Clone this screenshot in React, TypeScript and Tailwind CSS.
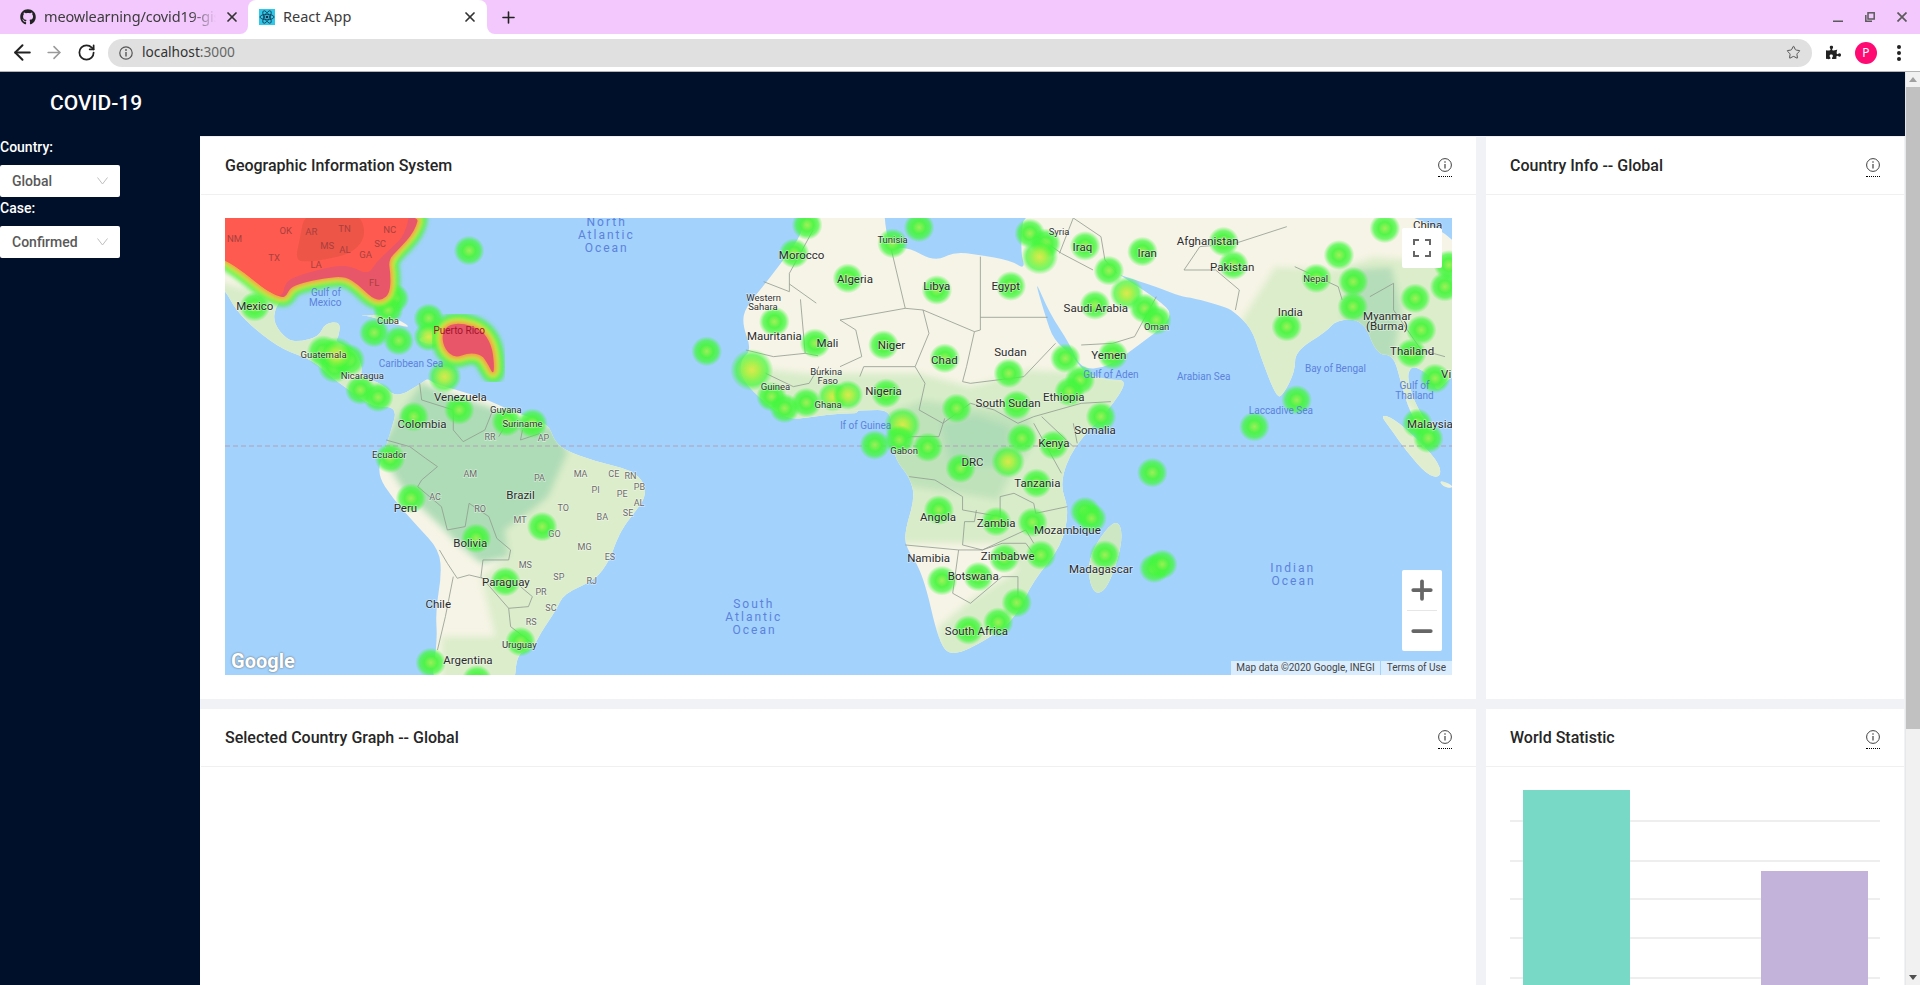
import { ArrowLeft, ArrowRight, RotateCw, Plus, X, Minus, Star } from 'lucide-react';
import { FaGithub, FaPuzzlePiece } from 'react-icons/fa';

// zoom-space helpers: west half and east half of the map share a y axis
const LEFT = 'translate(220 210) scale(0.3954 0.3333)';
const RIGHT = 'translate(840 210) scale(0.3954 0.3333)';
const GULF = 'translate(225 218) scale(0.3333)';
const px = (x: number, east = false) => (east ? 840 : 220) + x * 0.3954;
const py = (y: number) => 210 + y / 3;

// rounds a polygon outline so the coasts don't look like straight cuts
const soft = (d: string) =>
  d
    .split('M')
    .filter(Boolean)
    .map((sub) => {
      const n = sub.match(/-?\d+(\.\d+)?/g)!.map(Number);
      const p: [number, number][] = [];
      for (let i = 0; i < n.length; i += 2) p.push([n[i], n[i + 1]]);
      const mid = (a: [number, number], b: [number, number]) => `${(a[0] + b[0]) / 2} ${(a[1] + b[1]) / 2}`;
      let out = `M${mid(p[p.length - 1], p[0])}`;
      p.forEach((pt, i) => {
        out += ` Q${pt[0]} ${pt[1]} ${mid(pt, p[(i + 1) % p.length])}`;
      });
      return out + ' Z';
    })
    .join(' ');

type Lbl = [string, number, number, 'c' | 's' | 'w' | 'o' | 'b'];

const westLabels: Lbl[] = [
  ['North', 978, 37, 'o'], ['Atlantic', 977, 76, 'o'], ['Ocean', 978, 115, 'o'],
  ['South', 1350, 1183, 'o'], ['Atlantic', 1350, 1221, 'o'], ['Ocean', 1352, 1261, 'o'],
  ['Gulf of', 268, 246, 'w'], ['Mexico', 266, 277, 'w'], ['Caribbean Sea', 483, 459, 'w'],
  ['Mexico', 88, 288, 'c'], ['Cuba', 425, 330, 's'],
  ['Guatemala', 262, 432, 's'], ['Nicaragua', 360, 497, 's'], ['Venezuela', 608, 561, 'c'],
  ['Guyana', 723, 598, 's'], ['Suriname', 765, 640, 's'], ['Colombia', 511, 642, 'c'],
  ['Ecuador', 428, 732, 's'], ['Peru', 469, 894, 'c'], ['Brazil', 760, 855, 'c'],
  ['Bolivia', 633, 998, 'c'], ['Paraguay', 723, 1117, 'c'], ['Chile', 552, 1181, 'c'],
  ['Uruguay', 757, 1303, 's'], ['Argentina', 627, 1351, 'c'], ['Morocco', 1471, 136, 'c'],
  ['Western', 1375, 262, 's'], ['Sahara', 1373, 288, 's'], ['Mauritania', 1402, 378, 'c'],
  ['Mali', 1536, 399, 'c'], ['Burkina', 1533, 484, 's'], ['Faso', 1537, 510, 's'],
  ['Guinea', 1405, 528, 's'], ['Ghana', 1538, 582, 's'],
  ['RR', 683, 681, 'b'], ['AP', 818, 685, 'b'], ['AM', 633, 792, 'b'], ['PA', 808, 804, 'b'],
  ['MA', 912, 793, 'b'], ['CE', 996, 792, 'b'], ['RN', 1038, 798, 'b'], ['PB', 1061, 831, 'b'],
  ['PI', 950, 840, 'b'], ['PE', 1017, 852, 'b'], ['AL', 1060, 879, 'b'], ['AC', 544, 861, 'b'],
  ['RO', 658, 897, 'b'], ['TO', 868, 894, 'b'], ['SE', 1032, 909, 'b'], ['BA', 967, 921, 'b'],
  ['MT', 759, 930, 'b'], ['GO', 846, 972, 'b'], ['MG', 922, 1011, 'b'], ['ES', 986, 1041, 'b'],
  ['MS', 772, 1065, 'b'], ['SP', 857, 1101, 'b'], ['RJ', 940, 1113, 'b'], ['PR', 812, 1146, 'b'],
  ['SC', 837, 1194, 'b'], ['RS', 787, 1236, 'b'],
];

// these sit in the red part of the heat layer
const usLabels: [string, number, number][] = [
  ['NM', 37, 84], ['OK', 166, 60], ['AR', 231, 63], ['TN', 315, 54], ['NC', 429, 57], ['MS', 271, 105],
  ['AL', 316, 117], ['SC', 405, 99], ['GA', 368, 132], ['TX', 137, 141], ['LA', 243, 163], ['FL', 390, 216],
];

const eastLabels: Lbl[] = [
  ['Tunisia', 133, 87, 's'], ['Syria', 554, 64, 's'], ['Iraq', 613, 111, 'c'], ['Iran', 777, 129, 'c'],
  ['Afghanistan', 930, 93, 'c'], ['Pakistan', 992, 171, 'c'], ['China', 1486, 46, 'c'], ['Algeria', 38, 207, 'c'],
  ['Libya', 245, 229, 'c'], ['Egypt', 419, 228, 'c'], ['Saudi Arabia', 647, 294, 'c'], ['Nepal', 1203, 204, 's'],
  ['India', 1139, 305, 'c'], ['Myanmar', 1384, 319, 'c'], ['(Burma)', 1383, 348, 'c'], ['Oman', 801, 349, 's'],
  ['Niger', 130, 405, 'c'], ['Sudan', 431, 426, 'c'], ['Chad', 264, 449, 'c'], ['Yemen', 680, 435, 'c'],
  ['Thailand', 1447, 423, 'c'], ['Gulf of Aden', 685, 492, 'w'], ['Arabian Sea', 920, 498, 'w'],
  ['Bay of Bengal', 1253, 474, 'w'], ['Vi', 1533, 491, 'c'], ['Gulf of', 1453, 527, 'w'], ['Thailand', 1453, 555, 'w'],
  ['Nigeria', 110, 543, 'c'], ['Ethiopia', 566, 561, 'c'], ['South Sudan', 425, 579, 'c'], ['Laccadive Sea', 1115, 600, 'w'],
  ['Malaysia', 1492, 642, 'c'], ['Somalia', 645, 660, 'c'], ['lf of Guinea', 65, 645, 'w'], ['Kenya', 541, 699, 'c'],
  ['Gabon', 162, 720, 's'], ['DRC', 335, 755, 'c'], ['Tanzania', 499, 820, 'c'], ['Angola', 248, 921, 'c'],
  ['Zambia', 395, 939, 'c'], ['Mozambique', 575, 961, 'c'], ['Namibia', 224, 1044, 'c'], ['Zimbabwe', 424, 1038, 'c'],
  ['Madagascar', 660, 1077, 'c'], ['Botswana', 337, 1098, 'c'], ['South Africa', 345, 1263, 'c'],
  ['Indian', 1145, 1075, 'o'], ['Ocean', 1147, 1114, 'o'],
];

// x, y, hot (0 green, 1 yellow), stretch
type Blob = [number, number, number?, number?];
const westBlobs: Blob[] = [
  [630, 122], [88, 290], [390, 368], [452, 392], [528, 325], [528, 380, 1], [262, 425, 0, 1.1], [290, 470, 0, 1.1], [325, 450, 0, 1.1], [295, 435, 1, 1.2], [355, 540], [400, 562],
  [568, 500, 1, 1.1], [605, 600], [490, 620], [725, 635], [790, 640], [430, 745], [483, 865], [648, 985], [815, 950], [722, 1115],
  [760, 1295], [533, 1358], [650, 1410], [1231, 424], [1485, 45], [1452, 130], [1402, 335], [1505, 400], [1345, 480, 1, 1.4],
  [1395, 560], [1428, 595], [1483, 578], [1550, 560, 1],
  [440, 265], [425, 300],
];
const eastBlobs: Blob[] = [
  [200, 52], [133, 100], [20, 205], [245, 240], [432, 228], [110, 405], [265, 445], [480, 70], [520, 100], [505, 140, 1, 1.2], [620, 108],
  [680, 182], [765, 125], [970, 95], [995, 165], [1378, 55], [1262, 135], [1205, 205], [1298, 215], [1297, 290], [1455, 265],
  [1530, 230], [1540, 165], [725, 250, 1, 1.1], [770, 295], [800, 330], [645, 285], [1130, 350], [1470, 360], [1445, 430],
  [1505, 505], [690, 435], [570, 445], [607, 510], [580, 545], [427, 490], [295, 595], [447, 585], [117, 550], [20, 555, 1],
  [158, 645, 1, 1.2], [150, 690], [88, 705], [222, 712], [460, 685], [425, 755, 1, 1.1], [305, 775], [540, 705], [660, 620],
  [1155, 570], [1048, 650], [1460, 640], [1488, 685], [790, 788], [497, 820], [250, 900], [395, 935], [487, 937], [620, 905], [636, 925],
  [670, 1035], [508, 1035], [415, 1045], [795, 1075], [815, 1063], [258, 1112], [350, 1100], [447, 1178], [400, 1237], [325, 1260],
];

const labelClass: Record<string, string> = {
  c: 'text-[11.5px] fill-[#2b2b2b]',
  s: 'text-[9.5px] fill-[#333333]',
  w: 'text-[10px] fill-[#5c82dc] stroke-transparent',
  o: 'text-[12px] fill-[#5c82dc] tracking-[2px] stroke-transparent',
  b: 'text-[9px] fill-[#6b6b6b]',
};

const LAND_WEST = soft(
  'M-40 -40 L540 -40 L430 190 L400 270 L350 200 L250 190 L170 250 L140 290 L135 340 L170 390 L200 395 L250 380 L265 340 L305 335 L300 380 L290 395 L340 420 L360 470 L355 500 L410 520 L445 565 L510 520 L525 505 L540 520 L600 540 L680 570 L750 610 L830 640 L845 690 L870 720 L950 755 L1040 780 L1075 820 L1075 860 L1060 890 L1020 950 L1000 1000 L985 1050 L950 1110 L870 1150 L850 1200 L810 1270 L790 1320 L750 1330 L745 1440 L530 1440 L550 1300 L545 1200 L560 1100 L555 1020 L500 950 L440 870 L395 790 L420 710 L430 670 L450 590 L385 590 L340 550 L290 510 L235 450 L160 420 L90 360 L40 300 L13 240 L-40 180 ' +
    'M350 320 L420 310 L490 355 L440 342 L370 315 ' +
    'M495 385 L560 368 L570 400 L520 402 ' +
    'M1320 340 L1345 420 L1315 450 L1320 510 L1380 580 L1440 630 L1500 620 L1568 610 L1640 610 L1640 -40 L1500 -40 L1470 70 L1450 110 L1380 220 L1330 290',
);

const LAND_EAST = soft(
  'M-60 -40 L110 -40 L115 60 L130 120 L170 110 L240 155 L290 125 L350 135 L430 150 L470 180 L455 120 L470 -40 L1600 -40 L1600 494 L1548 494 L1509 549 L1500 504 L1450 464 L1433 494 L1450 570 L1484 640 L1509 634 L1490 700 L1442 610 L1420 524 L1400 434 L1357 434 L1324 329 L1256 329 L1231 364 L1151 424 L1151 484 L1121 554 L1104 564 L1062 434 L1041 354 L995 304 L970 289 L894 264 L860 259 L800 230 L720 200 L700 190 L800 265 L850 320 L750 410 L680 470 L610 480 L580 400 L530 310 L490 200 L520 320 L540 390 L590 440 L620 490 L680 510 L730 510 L680 600 L590 710 L555 820 L580 900 L560 1010 L490 1110 L440 1230 L370 1290 L285 1340 L250 1300 L210 1090 L165 1010 L165 960 L190 860 L175 800 L140 750 L130 680 L130 600 L60 600 L-60 610 ' +
    'M1366 614 L1399 624 L1467 694 L1518 764 L1518 804 L1484 794 L1433 724 L1391 654 ' +
    'M1515 810 L1548 825 L1548 835 L1525 830 ' +
    'M700 920 L718 985 L680 1130 L645 1158 L625 1090 L640 1010',
);

const US = soft('M-20 -20 L-20 118 L0 125 L60 165 L120 215 L170 240 L185 232 L195 210 L230 195 L300 180 L360 175 L400 200 L440 240 L470 248 L495 225 L497 170 L490 125 L520 95 L570 40 L585 -20');
const US_LAND = soft('M-40 -40 L-40 118 L0 125 L60 165 L120 215 L172 240 L180 195 L210 175 L300 150 L370 140 L430 172 L455 130 L500 90 L540 50 L560 -40');
const PR = soft('M650 355 L665 322 L710 315 L770 335 L800 380 L808 440 L805 470 L790 440 L770 410 L730 405 L690 420 L660 395');

function HeatShape({ d, core, wide }: { d: string; core: string; wide: number }) {
  return (
    <g strokeLinejoin="round">
      <path d={d} fill="#46f53c" stroke="#46f53c" strokeWidth={wide} opacity="0.85" filter="url(#soft)" />
      <path d={d} fill="#cdf040" stroke="#cdf040" strokeWidth={wide * 0.55} filter="url(#soft)" />
      <path d={d} fill="#f59a45" stroke="#f59a45" strokeWidth={wide * 0.22} filter="url(#soft)" />
      <path d={d} fill={core} />
    </g>
  );
}

function HeatBlobs({ blobs }: { blobs: Blob[] }) {
  return (
    <>
      {blobs.map(([x, y, hot, s], i) => (
        <ellipse key={i} cx={x} cy={y} rx={39 * (s ?? 1)} ry={45 * (s ?? 1)} fill={hot ? 'url(#hot)' : 'url(#heat)'} />
      ))}
    </>
  );
}

function Labels({ items, east }: { items: Lbl[]; east?: boolean }) {
  return (
    <g textAnchor="middle" dominantBaseline="central" stroke="#ffffff" strokeOpacity="0.45" strokeWidth="1.4" className="[paint-order:stroke]">
      {items.map(([t, x, y, k], i) => (
        <text key={i} x={px(x, east)} y={py(y)} className={labelClass[k]}>
          {t}
        </text>
      ))}
    </g>
  );
}

function MapDrawing() {
  return (
    <svg viewBox="225 218 1227 457" className="absolute inset-0 w-full h-full">
      <defs>
        <radialGradient id="heat">
          <stop offset="0" stopColor="#9cf052" stopOpacity="0.95" />
          <stop offset="0.42" stopColor="#4af540" stopOpacity="0.95" />
          <stop offset="0.72" stopColor="#40f83c" stopOpacity="0.72" />
          <stop offset="1" stopColor="#40f83c" stopOpacity="0" />
        </radialGradient>
        <radialGradient id="hot">
          <stop offset="0" stopColor="#dce848" stopOpacity="0.95" />
          <stop offset="0.32" stopColor="#a8f044" stopOpacity="0.95" />
          <stop offset="0.72" stopColor="#44f83c" stopOpacity="0.72" />
          <stop offset="1" stopColor="#40f83c" stopOpacity="0" />
        </radialGradient>
        <filter id="soft" x="-20%" y="-20%" width="140%" height="140%">
          <feGaussianBlur stdDeviation="7" />
        </filter>
        <filter id="veg" x="-10%" y="-10%" width="120%" height="120%">
          <feGaussianBlur stdDeviation="9" />
        </filter>
        <clipPath id="landW">
          <path d={LAND_WEST} />
        </clipPath>
        <clipPath id="landE">
          <path d={LAND_EAST} />
        </clipPath>
      </defs>
      <rect x="225" y="218" width="1227" height="457" fill="#a3d2fc" />

      {/* Americas and the west of Africa */}
      <g transform={LEFT}>
        <path fill="#f6f4e6" d={LAND_WEST} />
        <g clipPath="url(#landW)">
          <g filter="url(#veg)">
            <path fill="#dcedcb" d="M700 1500 L900 1500 L1200 1100 L1200 700 L870 680 L830 860 L720 960 L730 1040 L660 1100 L680 1200 L700 1300 Z" />
            <path fill="#d8ecc9" d="M-80 190 L50 400 L235 520 L385 650 L520 620 L520 470 L400 440 L400 300 L300 280 L250 340 L200 350 L170 320 L100 250 Z" />
            <path fill="#aedcb6" d="M440 640 L510 520 L600 560 L680 590 L750 630 L840 650 L880 725 L830 860 L790 900 L720 960 L730 1040 L660 1060 L600 1000 L560 950 L470 850 L400 720 Z" />
            <path fill="#dcedcb" d="M560 1280 L700 1280 L800 1400 L560 1480 Z" />
            <path fill="#d8ecc9" d="M1300 470 L1400 480 L1480 490 L1700 500 L1700 700 L1280 700 Z" />
          </g>
        </g>
        <g fill="none" stroke="#8f9a8f" strokeWidth="0.8">
          <path vectorEffect="non-scaling-stroke" d="M505 520 L510 570 L590 600 L590 660 L615 695 L670 660 L690 600 M725 640 L705 680 M765 660 L760 690 L810 670" />
          <path vectorEffect="non-scaling-stroke" d="M420 690 L480 710 L520 745 L550 770 L510 810 L500 830 L560 890 L575 960 L620 950 L630 880 L680 920 L700 985 L735 1020 L730 1050 L665 1050 L660 1100 L730 1195 L780 1190 L790 1160 L760 1130" />
          <path vectorEffect="non-scaling-stroke" d="M555 1020 L575 1060 L600 1105 L630 1095 L665 1105 M590 1100 L570 1220 L550 1320 M730 1195 L735 1250 L790 1300" />
          <path vectorEffect="non-scaling-stroke" d="M1500 60 L1440 190 L1440 245 L1375 215 M1440 222 L1568 330 M1468 268 L1480 430 L1400 440 L1330 420 M1480 430 L1568 450 M1380 490 L1450 530 L1490 520 L1520 460" />
        </g>
      </g>

      {/* Africa, Arabia, Asia */}
      <g transform={RIGHT}>
        <path fill="#f6f4e6" d={LAND_EAST} />
        <g clipPath="url(#landE)">
          <g filter="url(#veg)">
            <path fill="#d8ecc9" d="M-100 490 L200 490 L330 530 L480 480 L640 490 L800 520 L720 760 L680 1000 L560 1200 L400 1400 L240 1400 L250 1250 L330 1170 L450 1080 L400 1000 L100 1000 L100 860 L80 750 L-100 700 Z" />
            <path fill="#c0e2bb" d="M100 620 L210 570 L330 590 L480 620 L490 700 L430 800 L400 870 L300 850 L180 830 L100 750 Z" />
            <path fill="#aedcb6" d="M255 640 L340 615 L430 650 L430 730 L390 770 L280 770 Z" />
            <path fill="#dcedcb" d="M1000 360 L1100 170 L1250 180 L1350 140 L1650 170 L1650 560 L1500 600 L1460 620 L1350 460 L1300 380 L1230 420 L1190 520 L1110 620 L1020 460 Z" />
            <path fill="#b6ddb9" d="M1290 180 L1395 170 L1420 300 L1400 450 L1340 450 L1310 350 L1270 320 Z" />
            <path fill="#e0eecf" d="M1340 590 L1420 600 L1540 760 L1540 830 L1470 820 L1370 680 Z" />
            <path fill="#cde7c5" d="M590 1000 L720 890 L760 1000 L680 1190 L590 1120 Z" />
          </g>
        </g>
        <g fill="none" stroke="#8f9a8f" strokeWidth="0.8">
          <path vectorEffect="non-scaling-stroke" d="M0 330 L40 360 L55 440 L0 470 M0 330 L165 295 L210 300 L340 365 L355 360 L355 140 M165 295 L130 120 M210 300 L225 370 L190 470 L60 470 L50 500 M340 365 L320 470 L310 515 L330 520 L465 500 L545 400 M355 322 L525 322" />
          <path vectorEffect="non-scaling-stroke" d="M190 470 L215 520 L200 600 L260 640 L330 580 L390 600 L450 640 L490 620 L610 580 L685 575 M130 700 L180 680 L250 680 L265 625 M175 800 L240 810 L310 860 L310 900 L405 920 L405 860 L440 850 L490 880 L495 910 L575 890" />
          <path vectorEffect="non-scaling-stroke" d="M165 1005 L300 1020 L360 1020 L410 1000 L470 1000 L495 1040 M300 1020 L285 1150 L330 1180 L410 1100 L450 1100 L450 1180 M315 935 L340 935 L345 900 M315 935 L310 1005 L360 1020 L470 960 L490 1000" />
          <path vectorEffect="non-scaling-stroke" d="M510 620 L590 710 M590 640 L600 700 M490 640 L560 790 M500 80 L560 130 L640 180 M555 130 L590 24 M590 24 L660 80 L670 150 L700 190 M610 405 L690 400 L745 380 L800 260 M870 180 L910 110 L1000 100 L1130 50 M870 180 L950 180 L1010 240 L1000 300 M1150 170 L1260 230 L1270 270 M1340 260 L1400 220 L1400 300 L1470 420 L1530 440" />
        </g>
      </g>

      <line x1="225" x2="1452" y1="446" y2="446" stroke="#b29fb6" strokeWidth="1.2" strokeDasharray="5 3" />

      {/* heat layer */}
      <g transform={LEFT}>
        <HeatBlobs blobs={westBlobs} />
      </g>
      <g transform={RIGHT}>
        <HeatBlobs blobs={eastBlobs} />
      </g>
      <g transform={GULF}>
        <HeatShape d={US} core="#e8566a" wide={58} />
        <path d={US_LAND} fill="#ff5a4f" />
        <path d={soft('M210 130 L225 60 L240 -20 L400 -20 L425 50 L385 105 L300 125 L260 130')} fill="#d8503f" opacity="0.45" />
        <HeatShape d={PR} core="#e8566a" wide={66} />
      </g>

      <Labels items={westLabels} />
      <Labels items={eastLabels} east />
      <g textAnchor="middle" dominantBaseline="central" className="text-[9.5px] fill-[#a8403f]">
        {usLabels.map(([t, x, y]) => (
          <text key={`${t}${x}`} x={px(x)} y={py(y)}>
            {t}
          </text>
        ))}
      </g>
      <text x={px(605)} y={py(361)} textAnchor="middle" dominantBaseline="central" className="text-[10px] fill-[#a3142a]">
        Puerto Rico
      </text>
    </svg>
  );
}

function InfoMark() {
  return (
    <span className="border-b border-dotted border-black pb-[4px] mt-[3px]">
      <svg width="14" height="14" viewBox="0 0 14 14" fill="none" className="block">
        <circle cx="7" cy="7" r="6.4" stroke="#404040" strokeWidth="1" />
        <circle cx="7" cy="4" r="0.8" fill="#404040" />
        <path d="M7 6 V10.5" stroke="#404040" strokeWidth="1.2" />
      </svg>
    </span>
  );
}

function CardTitle({ title }: { title: string }) {
  return (
    <div className="h-[58px] flex items-center justify-between px-[24px] border-b border-[#f0f0f0] shrink-0">
      <span className="text-[16px] font-medium text-[#262626]">{title}</span>
      <InfoMark />
    </div>
  );
}

function Select({ value }: { value: string }) {
  return (
    <div className="w-[120px] h-[32px] bg-white rounded-[2px] flex items-center justify-between pl-[12px] pr-[12px] text-[14px] text-[#595959]">
      <span>{value}</span>
      <svg width="11" height="8" viewBox="0 0 11 8" fill="none" stroke="#bfbfbf" strokeWidth="1">
        <path d="M0.5 0.5 L5.5 7 L10.5 0.5" />
      </svg>
    </div>
  );
}

function BrowserChrome() {
  return (
    <>
      <div className="h-[34px] bg-[#f2c8fd] flex items-end font-['Noto_Sans'] text-[14.5px] text-[#3c3c3c] shrink-0">
        <div className="w-[248px] h-[34px] flex items-center pl-[20px]">
          <FaGithub size={16} className="text-[#222222] shrink-0" />
          <span className="ml-[8px] w-[172px] overflow-hidden whitespace-nowrap tracking-[-0.15px] [mask-image:linear-gradient(to_right,black_85%,transparent)]">
            meowlearning/covid19-gis
          </span>
          <X size={16} strokeWidth={2.6} className="ml-[8px] text-[#333333] shrink-0" />
        </div>
        <div className="relative w-[239px] h-[34px] bg-white rounded-t-[8px] flex items-center pl-[11px]">
          <svg width="8" height="8" viewBox="0 0 8 8" className="absolute left-[-8px] bottom-0">
            <path d="M8 0 V8 H0 A8 8 0 0 0 8 0 Z" fill="#ffffff" />
          </svg>
          <svg width="8" height="8" viewBox="0 0 8 8" className="absolute right-[-8px] bottom-0">
            <path d="M0 0 V8 H8 A8 8 0 0 1 0 0 Z" fill="#ffffff" />
          </svg>
          <svg width="16" height="16" viewBox="0 0 16 16" className="shrink-0">
            <rect width="16" height="16" fill="#2fc8e8" />
            <g fill="none" stroke="#17324d" strokeWidth="0.8">
              <ellipse cx="8" cy="8" rx="7" ry="2.7" />
              <ellipse cx="8" cy="8" rx="7" ry="2.7" transform="rotate(60 8 8)" />
              <ellipse cx="8" cy="8" rx="7" ry="2.7" transform="rotate(120 8 8)" />
            </g>
            <circle cx="8" cy="8" r="1.3" fill="#17324d" />
          </svg>
          <span className="ml-[8px] w-[179px]">React App</span>
          <X size={16} strokeWidth={2.6} className="text-[#333333] shrink-0" />
        </div>
        <div className="h-[34px] flex items-center ml-[12px]">
          <Plus size={19} strokeWidth={2} className="text-[#222222]" />
        </div>
        <div className="flex-1" />
        <div className="h-[34px] flex items-center gap-[22px] pr-[13px]">
          <svg width="10" height="10" viewBox="0 0 10 10" fill="#5a5a5a">
            <rect x="0" y="8.5" width="10" height="1.5" />
          </svg>
          <svg width="10" height="10" viewBox="0 0 10 10" fill="none" stroke="#5a5a5a" strokeWidth="1.5">
            <rect x="3" y="0.8" width="6.2" height="6.2" />
            <path d="M0.8 3 V9.2 H7" />
          </svg>
          <svg width="10" height="10" viewBox="0 0 10 10" fill="none" stroke="#5a5a5a" strokeWidth="1.7">
            <path d="M0.5 0.5 L9.5 9.5 M9.5 0.5 L0.5 9.5" />
          </svg>
        </div>
      </div>
      <div className="h-[38px] bg-white border-b border-[#b4b4b4] flex items-center shrink-0">
        <div className="w-[44px] flex justify-center">
          <ArrowLeft size={25} strokeWidth={1.9} className="text-[#222222]" />
        </div>
        <div className="w-[20px] flex justify-center">
          <ArrowRight size={25} strokeWidth={1.9} className="text-[#9a9a9a]" />
        </div>
        <div className="w-[44px] flex justify-center">
          <RotateCw size={19} strokeWidth={2.2} className="text-[#222222]" />
        </div>
        <div className="w-[1704px] h-[28px] bg-[#e0e0e0] rounded-full flex items-center pl-[11px] pr-[11px] font-['Noto_Sans'] text-[13.7px]">
          <svg width="14" height="14" viewBox="0 0 14 14" fill="none" className="block">
            <circle cx="7" cy="7" r="6.2" stroke="#555555" strokeWidth="1.2" />
            <circle cx="7" cy="4" r="0.9" fill="#555555" />
            <path d="M7 6 V10.5" stroke="#555555" strokeWidth="1.4" />
          </svg>
          <span className="ml-[9px] text-[#333333]">localhost</span>
          <span className="text-[#666666]">:3000</span>
          <div className="flex-1" />
          <Star size={15} strokeWidth={1.6} className="text-[#555555]" />
        </div>
        <FaPuzzlePiece size={15} className="ml-[14px] text-[#222222]" />
        <div className="ml-[14px] w-[22px] h-[22px] rounded-full bg-[#ff0a73] text-white text-[12px] flex items-center justify-center font-['Noto_Sans']">
          P
        </div>
        <div className="ml-[20px] flex flex-col gap-[2px]">
          <span className="w-[4px] h-[4px] rounded-full bg-[#222222]" />
          <span className="w-[4px] h-[4px] rounded-full bg-[#222222]" />
          <span className="w-[4px] h-[4px] rounded-full bg-[#222222]" />
        </div>
      </div>
    </>
  );
}

export default function App() {
  return (
    <div className="h-[985px] w-[1920px] overflow-hidden flex flex-col font-['Roboto'] bg-[#f0f2f5]">
      <BrowserChrome />
      <div className="flex-1 min-h-0 flex">
        <div className="flex-1 min-w-0 flex flex-col">
          {/* Header */}
          <header className="h-[64px] bg-[#00102a] flex items-center pl-[50px] shrink-0">
            <span className="text-[21px] font-medium text-white">COVID-19</span>
          </header>

          <div className="flex-1 min-h-0 flex">
            {/* Sidebar */}
            <aside className="w-[200px] bg-[#00102a] text-white text-[14px] font-medium shrink-0">
              <div className="h-[29px] pb-[6px] flex items-center">Country:</div>
              <Select value="Global" />
              <div className="h-[29px] pb-[6px] flex items-center">Case:</div>
              <Select value="Confirmed" />
            </aside>

            <div className="flex-1 min-w-0 grid grid-cols-[1276px_418px] grid-rows-[563px_600px] gap-[10px]">
              <section className="bg-white flex flex-col border-t border-[#f0f0f0] pl-px">
                <CardTitle title="Geographic Information System" />
                <div className="pt-[23px] px-[24px]">
                  <div className="relative h-[457px] overflow-hidden">
                    <MapDrawing />
                    <button className="absolute top-[10px] right-[10px] w-[40px] h-[40px] bg-white rounded-[2px] flex items-center justify-center">
                      <svg width="18" height="18" viewBox="0 0 18 18" fill="none" stroke="#666666" strokeWidth="2">
                        <path d="M1 6 V1 H6 M12 1 H17 V6 M17 12 V17 H12 M6 17 H1 V12" />
                      </svg>
                    </button>
                    <div className="absolute bottom-[24px] right-[10px] w-[40px] h-[81px] bg-white rounded-[2px] flex flex-col items-center">
                      <div className="h-[40px] flex items-center justify-center">
                        <Plus size={30} strokeWidth={3} className="text-[#666666]" />
                      </div>
                      <div className="w-[30px] h-px bg-[#e6e6e6]" />
                      <div className="h-[40px] flex items-center justify-center">
                        <Minus size={30} strokeWidth={3} className="text-[#666666]" />
                      </div>
                    </div>
                    <span className="absolute left-[6px] bottom-[-1px] text-[20px] font-bold text-white [text-shadow:0_0_2px_#555555]">
                      Google
                    </span>
                    <div className="absolute right-0 bottom-0 h-[14px] flex text-[10px] leading-[14px] text-[#444444]">
                      <span className="bg-[#ffffff99] px-[5px]">Map data ©2020 Google, INEGI</span>
                      <span className="bg-[#ffffff99] px-[6px] ml-px">Terms of Use</span>
                    </div>
                  </div>
                </div>
              </section>

              <section className="bg-white flex flex-col border-t border-[#f0f0f0]">
                <CardTitle title="Country Info -- Global" />
              </section>

              <section className="bg-white flex flex-col pl-px">
                <CardTitle title="Selected Country Graph -- Global" />
              </section>

              <section className="bg-white flex flex-col">
                <CardTitle title="World Statistic" />
                <div className="pt-[23px] px-[24px]">
                  <svg width="370" height="320" viewBox="0 0 370 320" className="block">
                    {[31, 71, 109, 148, 188].map((y) => (
                      <line key={y} x1="0" x2="370" y1={y} y2={y} stroke="#e8e8e8" strokeWidth="1.5" />
                    ))}
                    <rect x="13" y="0" width="107" height="320" fill="#78dac6" />
                    <rect x="251" y="81" width="107" height="239" fill="#c3b3da" />
                  </svg>
                </div>
              </section>
            </div>
          </div>
        </div>

        {/* Scrollbar */}
        <div className="w-[15px] bg-[#f1f1f1] flex flex-col items-center shrink-0 border-l border-[#e8e8e8]">
          <div className="h-[15px] flex items-center justify-center">
            <div className="w-0 h-0 border-x-[4px] border-x-transparent border-b-[5px] border-b-[#a0a0a0]" />
          </div>
          <div className="w-full h-[642px] bg-[#c1c1c1]" />
          <div className="flex-1" />
          <div className="h-[15px] flex items-center justify-center">
            <div className="w-0 h-0 border-x-[4px] border-x-transparent border-t-[5px] border-t-[#505050]" />
          </div>
        </div>
      </div>
    </div>
  );
}
